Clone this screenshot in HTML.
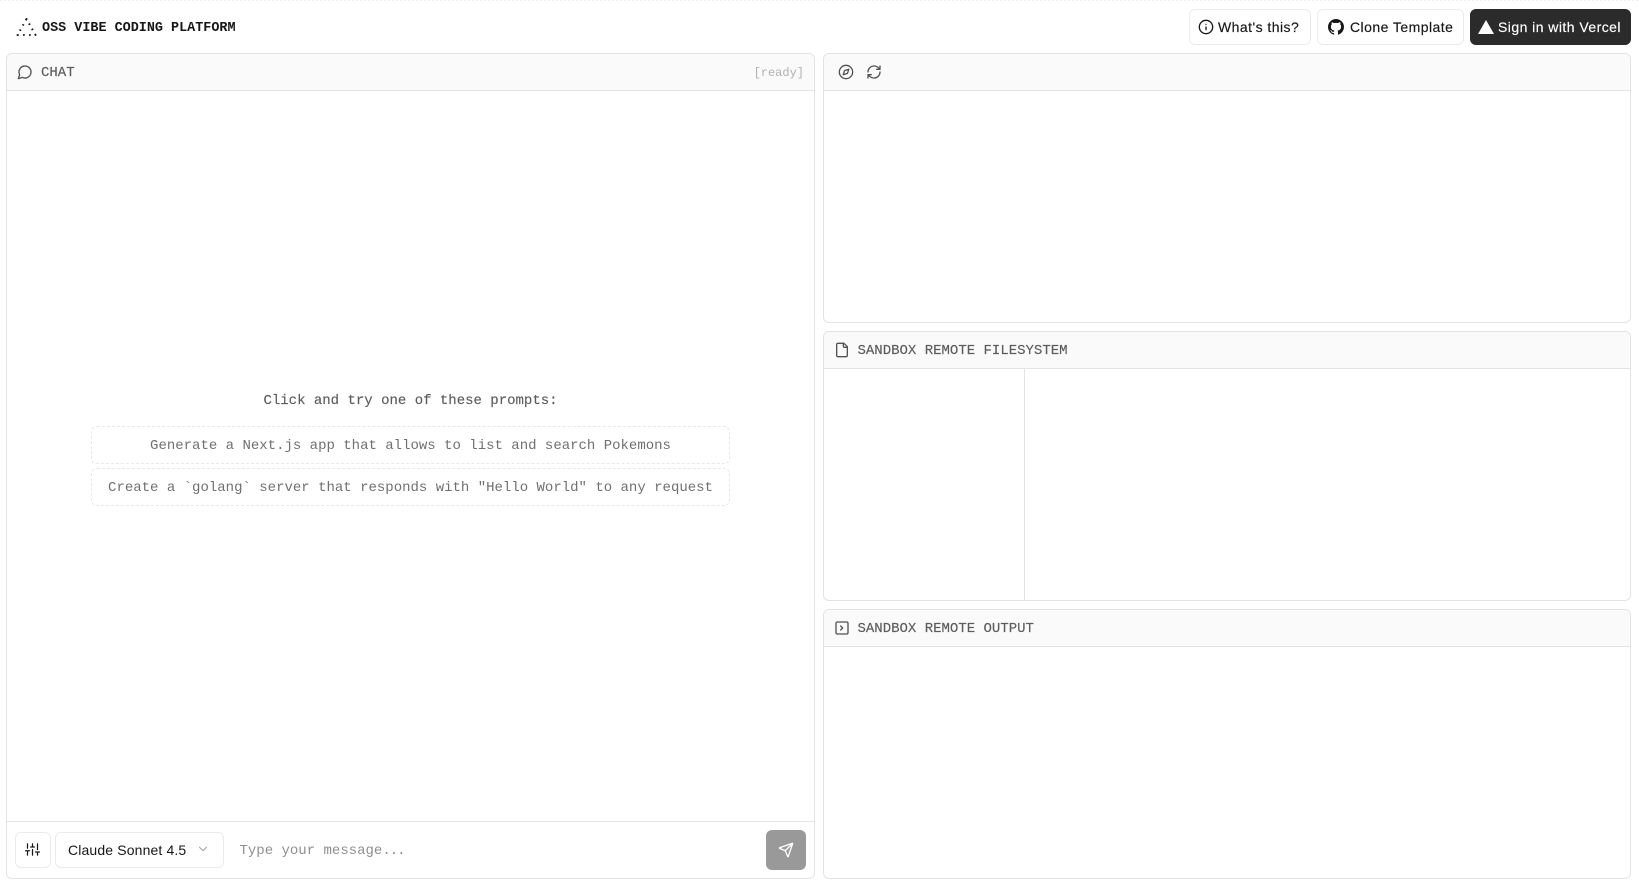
<!DOCTYPE html>
<html><head><meta charset="utf-8"><style>
*{box-sizing:border-box;margin:0;padding:0}
html,body{width:1639px;height:886px;background:#fff;overflow:hidden}
body{position:relative;font-family:"Liberation Sans",sans-serif;color:#171717}
.a{position:absolute}
.m{font-family:"Liberation Mono",monospace;white-space:pre}
.panel{position:absolute;border:1px solid #e3e3e3;border-radius:6px;background:#fff;overflow:hidden}
.hd{position:absolute;left:0;right:0;top:0;height:37px;background:#fafafa;border-bottom:1px solid #e3e3e3}
.t{position:absolute;font-family:"Liberation Mono",monospace;font-size:14px;line-height:20px;color:#5c5c5c;white-space:pre;-webkit-text-stroke:.15px #5c5c5c}
.btn{position:absolute;top:9px;height:36px;border:1px solid #ebebeb;border-radius:6px;background:#fff;font-size:14px;line-height:34px;white-space:pre;color:#171717;letter-spacing:.45px;-webkit-text-stroke:.15px currentColor}
svg{position:absolute;fill:none;stroke:currentColor;stroke-width:2;stroke-linecap:round;stroke-linejoin:round}
.p{position:absolute;left:91px;width:639px;height:38px;border:1px dashed #e8e8e8;border-radius:6px;text-align:center;font-family:"Liberation Mono",monospace;font-size:14px;line-height:39px;color:#707070;white-space:pre}
</style></head><body>
<div class="a" style="left:0;right:0;top:0;height:1px;background-image:repeating-linear-gradient(90deg,#f0f0f0 0 2px,#fff 2px 4px)"></div>

<svg style="left:16px;top:17px;color:#171717" width="21" height="20" viewBox="0 0 21 20" stroke-width="1.4"><path d="M10.5 2 L1.5 18 H19.5 Z" stroke-dasharray="1.5 4.5" stroke-linecap="butt"/></svg>
<div class="a m" style="left:42px;top:19px;font-size:13.45px;line-height:20px;font-weight:bold;color:#171717">OSS VIBE CODING PLATFORM</div>

<div class="btn" style="left:1189px;width:122px;padding-left:28px">What's this?</div>
<svg style="left:1198px;top:19px;color:#171717" width="16" height="16" viewBox="0 0 24 24"><circle cx="12" cy="12" r="10"/><path d="M12 16v-4M12 8h.01"/></svg>
<div class="btn" style="left:1317px;width:147px;padding-left:32px">Clone Template</div>
<svg style="left:1328px;top:19px;color:#171717;stroke:none;fill:#171717" width="16" height="16" viewBox="0 0 16 16"><path d="M8 0C3.58 0 0 3.58 0 8c0 3.54 2.29 6.53 5.47 7.59.4.07.55-.17.55-.38v-1.34c-2.23.48-2.7-1.07-2.7-1.07-.36-.92-.89-1.17-.89-1.17-.73-.5.05-.49.05-.49.8.06 1.23.83 1.23.83.71 1.22 1.87.87 2.33.66.07-.52.28-.87.5-1.07-1.77-.2-3.64-.89-3.64-3.95 0-.87.31-1.59.82-2.15-.08-.2-.36-1.02.08-2.12 0 0 .67-.21 2.2.82A7.6 7.6 0 0 1 8 3.87c.68 0 1.36.09 2 .27 1.53-1.04 2.2-.82 2.2-.82.44 1.1.16 1.92.08 2.12.51.56.82 1.27.82 2.15 0 3.07-1.87 3.75-3.65 3.95.29.25.54.73.54 1.48v2.19c0 .21.15.46.55.38A8 8 0 0 0 16 8c0-4.42-3.58-8-8-8z"/></svg>
<div class="btn" style="left:1470px;width:161px;padding-left:27px;background:#2b2b2b;border-color:#2b2b2b;color:#fff">Sign in with Vercel</div>
<svg style="left:1478px;top:20px;stroke:none;fill:#fff" width="16" height="14" viewBox="0 0 16 14"><path d="M8 0l8 14H0z"/></svg>

<div class="panel" style="left:6px;top:53px;width:809px;height:826px">
  <div class="hd"></div>
  <div class="a" style="left:0;right:0;bottom:56px;height:1px;background:#e3e3e3"></div>
</div>
<svg style="left:17px;top:64px;color:#525252" width="16" height="16" viewBox="0 0 24 24"><path d="M7.9 20A9 9 0 1 0 4 16.1L2 22z"/></svg>
<div class="t" style="left:41px;top:63px">CHAT</div>
<div class="a m" style="right:835px;top:63px;font-size:12px;line-height:20px;color:#b0b0b0">[ready]</div>

<div class="a m" style="left:6px;width:809px;top:391px;text-align:center;font-size:14px;line-height:20px;color:#5c5c5c;-webkit-text-stroke:.15px #5c5c5c">Click and try one of these prompts:</div>
<div class="p" style="top:426px">Generate a Next.js app that allows to list and search Pokemons</div>
<div class="p" style="top:468px">Create a `golang` server that responds with "Hello World" to any request</div>

<div class="a" style="left:15px;top:832px;width:36px;height:36px;border:1px solid #ebebeb;border-radius:6px"></div>
<svg style="left:25px;top:842px;color:#171717" width="15" height="15" viewBox="0 0 24 24"><path d="M4 21v-7M4 10V3M12 21v-9M12 8V3M20 21v-5M20 12V3M1 14h6M9 8h6M17 16h6"/></svg>
<div class="a" style="left:55px;top:832px;width:169px;height:36px;border:1px solid #ebebeb;border-radius:6px"></div>
<div class="a" style="left:68px;top:840px;font-size:14px;line-height:20px;white-space:pre;color:#171717;letter-spacing:.14px">Claude Sonnet 4.5</div>
<svg style="left:196px;top:842px;color:#a8a8a8" width="14" height="14" viewBox="0 0 24 24"><path d="M6 9l6 6 6-6"/></svg>
<div class="a m" style="left:239.5px;top:841px;font-size:14px;line-height:20px;color:#8f8f8f">Type your message<span style="letter-spacing:-1px">...</span></div>
<div class="a" style="left:766px;top:830px;width:40px;height:40px;background:#999;border-radius:6px"></div>
<svg style="left:778px;top:842px;color:#fff" width="16" height="16" viewBox="0 0 24 24"><path d="M14.5 21.7a.5.5 0 0 0 .9 0l6.5-19a.5.5 0 0 0-.6-.6l-19 6.5a.5.5 0 0 0 0 .9l7.9 3.2a2 2 0 0 1 1.1 1.1zM21.9 2.1 10.9 13.1"/></svg>

<div class="panel" style="left:823px;top:53px;width:808px;height:270px"><div class="hd"></div></div>
<svg style="left:838px;top:64px;color:#525252" width="16" height="16" viewBox="0 0 24 24"><circle cx="12" cy="12" r="10"/><path d="M16.2 7.8l-2 6.3-6.4 2.1 2-6.3z"/></svg>
<svg style="left:866px;top:64px;color:#525252" width="16" height="16" viewBox="0 0 24 24"><path d="M3 12a9 9 0 0 1 9-9 9.8 9.8 0 0 1 6.7 2.7L21 8M21 3v5h-5M21 12a9 9 0 0 1-9 9 9.8 9.8 0 0 1-6.7-2.7L3 16M8 16H3v5"/></svg>

<div class="panel" style="left:823px;top:331px;width:808px;height:270px"><div class="hd"></div>
  <div class="a" style="left:200px;top:37px;bottom:0;width:1px;background:#e3e3e3"></div>
</div>
<svg style="left:834px;top:342px;color:#525252" width="16" height="16" viewBox="0 0 24 24"><path d="M15 2H6a2 2 0 0 0-2 2v16a2 2 0 0 0 2 2h12a2 2 0 0 0 2-2V7z"/><path d="M14 2v4a2 2 0 0 0 2 2h4"/></svg>
<div class="t" style="left:857.5px;top:341px">SANDBOX REMOTE FILESYSTEM</div>

<div class="panel" style="left:823px;top:609px;width:808px;height:270px"><div class="hd"></div></div>
<svg style="left:834px;top:620px;color:#525252" width="16" height="16" viewBox="0 0 24 24"><rect x="3" y="3" width="18" height="18" rx="2"/><path d="M10 9l3 3-3 3"/></svg>
<div class="t" style="left:857.5px;top:619px">SANDBOX REMOTE OUTPUT</div>
</body></html>
